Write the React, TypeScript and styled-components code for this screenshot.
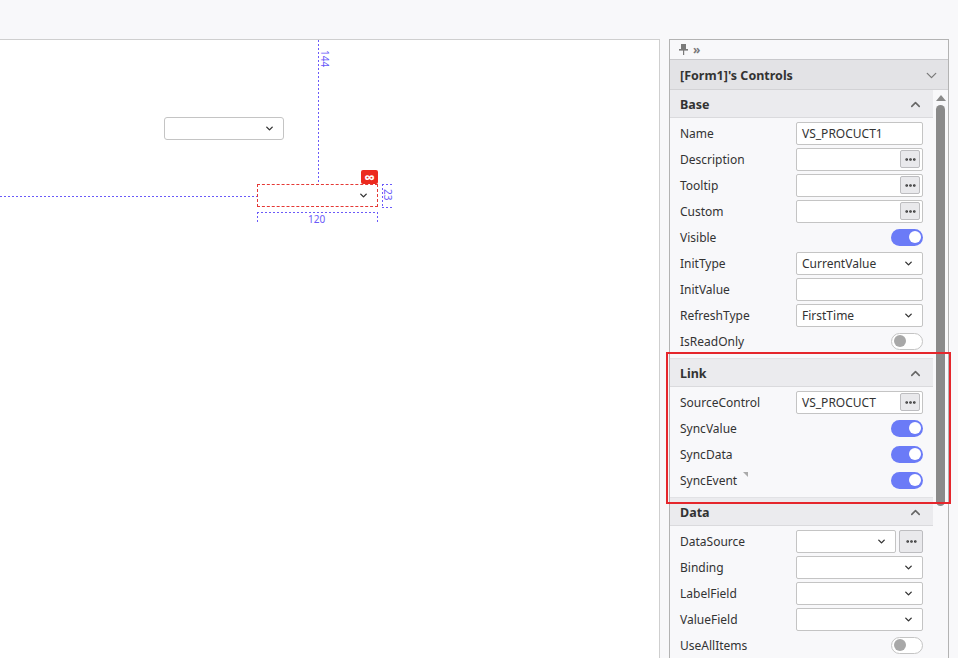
import React from 'react';
import styled, { createGlobalStyle } from 'styled-components';
import { ChevronDown, ChevronUp, Ellipsis } from 'lucide-react';

const GlobalStyle = createGlobalStyle`
  html, body {
    margin: 0;
    padding: 0;
    background: #f8f8fa;
    font-family: "Noto Sans", "Open Sans", sans-serif;
    color: #333;
  }
  * { box-sizing: border-box; }
`;

const GUIDE = '#6a5af9';

const Page = styled.div`
  position: relative;
  width: 958px;
  height: 658px;
  padding-top: 39px;
  display: flex;
  gap: 9px;
  overflow: hidden;
`;

const Canvas = styled.div`
  position: relative;
  flex: 0 0 660px;
  height: 619px;
  background: #fff;
  border-top: 1px solid #cfcfcf;
  border-right: 1px solid #cfcfcf;
`;

const VLine = styled.div<{ $h: number }>`
  position: absolute;
  width: 1px;
  height: ${p => p.$h}px;
  background: repeating-linear-gradient(to bottom, ${GUIDE} 0 2px, transparent 2px 4px);
`;

const HLine = styled.div<{ $w: number }>`
  position: absolute;
  height: 1px;
  width: ${p => p.$w}px;
  background: repeating-linear-gradient(to right, ${GUIDE} 0 2px, transparent 2px 4px);
`;

const GuideText = styled.span<{ $rotate?: boolean }>`
  position: absolute;
  font-size: 10px;
  line-height: 10px;
  color: ${GUIDE};
  transform: ${p => (p.$rotate ? 'rotate(90deg)' : 'none')};
  transform-origin: left top;
`;

const DropBox = styled.div<{ $selected?: boolean }>`
  position: absolute;
  display: flex;
  align-items: center;
  justify-content: flex-end;
  padding-right: 8px;
  height: 23px;
  background: #fff;
  border: ${p => (p.$selected ? '1px dashed #e53935' : '1px solid #c4c4c4')};
  border-radius: ${p => (p.$selected ? '0' : '3px')};
  color: #333;
`;

const Badge = styled.div`
  position: absolute;
  width: 17px;
  height: 14px;
  border-radius: 2px;
  background: #ec2a1e;
  color: #fff;
  font-size: 15px;
  font-weight: 700;
  line-height: 14px;
  text-align: center;
`;

const Panel = styled.div`
  flex: 0 0 280px;
  height: 640px;
  border: 1px solid #b3b3b3;
  border-bottom: none;
  background: #f8f8fa;
  display: flex;
  flex-direction: column;
`;

const TopBar = styled.div`
  height: 20px;
  display: flex;
  align-items: center;
  gap: 5px;
  padding-left: 9px;
  color: #7a7a7a;
  font-size: 12px;
  font-weight: 700;
  border-bottom: 1px solid #c9c9cc;
`;

const TitleBar = styled.div`
  height: 30px;
  display: flex;
  align-items: center;
  justify-content: space-between;
  padding: 1px 8px 0 10px;
  background: #e3e3e6;
  font-size: 12.5px;
  font-weight: 700;
  color: #333;
  border-bottom: 1px solid #d2d2d5;
`;

const Body = styled.div`
  flex: 1;
  display: flex;
  min-height: 0;
`;

const Sections = styled.div`
  flex: 1;
  display: flex;
  flex-direction: column;
`;

const Scrollbar = styled.div`
  flex: 0 0 15px;
  display: flex;
  flex-direction: column;
  align-items: center;
  padding-top: 5px;
  gap: 4px;
`;

const ScrollArrow = styled.div`
  width: 0;
  height: 0;
  border-left: 5px solid transparent;
  border-right: 5px solid transparent;
  border-bottom: 6px solid #8a8a8a;
`;

const Thumb = styled.div`
  width: 9px;
  height: 401px;
  border-radius: 5px;
  background: #8a8a8a;
`;

const SectionHeader = styled.div`
  height: 28px;
  display: flex;
  align-items: center;
  justify-content: space-between;
  padding: 1px 10px 0 10px;
  background: #ebebee;
  border-bottom: 1px solid #dadadd;
  font-size: 12.5px;
  font-weight: 700;
  color: #333;
`;

const SectionBody = styled.div`
  padding: 2px 9px 4px 10px;
  border-bottom: 1px solid #e2e2e5;
`;

const Row = styled.div`
  height: 26px;
  display: flex;
  align-items: center;
`;

const Label = styled.div`
  flex: 0 0 116px;
  font-size: 12px;
  color: #333;
`;

const Tick = styled.span`
  display: inline-block;
  margin-left: 6px;
  width: 0;
  height: 0;
  vertical-align: top;
  border-top: 5px solid #aaa;
  border-left: 5px solid transparent;
`;

const Field = styled.div<{ $w?: number }>`
  width: ${p => p.$w ?? 127}px;
  height: 23px;
  background: #fff;
  border: 1px solid #c4c4c4;
  border-radius: 2px;
  display: flex;
  align-items: center;
  justify-content: space-between;
  padding: 0 2px 0 5px;
  font-size: 12px;
  color: #333;
`;

const DotsBtn = styled.div<{ $outside?: boolean }>`
  width: ${p => (p.$outside ? 24 : 20)}px;
  height: ${p => (p.$outside ? 23 : 18)}px;
  margin-left: ${p => (p.$outside ? 3 : 0)}px;
  background: #e9e9ec;
  border: 1px solid #bdbdc0;
  border-radius: 2px;
  display: flex;
  align-items: center;
  justify-content: center;
  color: #333;
`;

const ChevronSlot = styled.span`
  display: flex;
  padding-right: 6px;
  color: #333;
`;

const ToggleWrap = styled.div`
  margin-left: auto;
  margin-right: 1px;
  width: 32px;
  height: 17px;
  border-radius: 9px;
  display: flex;
  align-items: center;
  padding: 0 2px;
  &[data-on='true'] {
    background: #6b7bf7;
    justify-content: flex-end;
  }
  &[data-on='false'] {
    background: #fff;
    border: 1px solid #c4c4c4;
    justify-content: flex-start;
  }
`;

const Knob = styled.div<{ $on: boolean }>`
  width: 12px;
  height: 12px;
  border-radius: 50%;
  background: ${p => (p.$on ? '#fff' : '#a8a8a8')};
`;

const Highlight = styled.div`
  position: absolute;
  left: 666px;
  top: 352px;
  width: 285px;
  height: 152px;
  border: 2px solid #e5262c;
  pointer-events: none;
`;

type Kind = 'text' | 'dots' | 'toggle' | 'select' | 'selectDots';
type Prop = { label: string; kind: Kind; value?: string; on?: boolean; mark?: boolean };

const sections: { title: string; rows: Prop[] }[] = [
  {
    title: 'Base',
    rows: [
      { label: 'Name', kind: 'text', value: 'VS_PROCUCT1' },
      { label: 'Description', kind: 'dots' },
      { label: 'Tooltip', kind: 'dots' },
      { label: 'Custom', kind: 'dots' },
      { label: 'Visible', kind: 'toggle', on: true },
      { label: 'InitType', kind: 'select', value: 'CurrentValue' },
      { label: 'InitValue', kind: 'text' },
      { label: 'RefreshType', kind: 'select', value: 'FirstTime' },
      { label: 'IsReadOnly', kind: 'toggle', on: false },
    ],
  },
  {
    title: 'Link',
    rows: [
      { label: 'SourceControl', kind: 'dots', value: 'VS_PROCUCT' },
      { label: 'SyncValue', kind: 'toggle', on: true },
      { label: 'SyncData', kind: 'toggle', on: true },
      { label: 'SyncEvent', kind: 'toggle', on: true, mark: true },
    ],
  },
  {
    title: 'Data',
    rows: [
      { label: 'DataSource', kind: 'selectDots' },
      { label: 'Binding', kind: 'select' },
      { label: 'LabelField', kind: 'select' },
      { label: 'ValueField', kind: 'select' },
      { label: 'UseAllItems', kind: 'toggle', on: false },
    ],
  },
];

const Chevron = () => (
  <ChevronSlot>
    <ChevronDown size={11} strokeWidth={3} />
  </ChevronSlot>
);

const Dots = () => <Ellipsis size={13} strokeWidth={3} />;

const Toggle = ({ on }: { on: boolean }) => (
  <ToggleWrap data-on={String(on)}>
    <Knob $on={on} />
  </ToggleWrap>
);

const Editor = ({ p }: { p: Prop }) => {
  switch (p.kind) {
    case 'toggle':
      return <Toggle on={!!p.on} />;
    case 'dots':
      return (
        <Field>
          <span>{p.value}</span>
          <DotsBtn>
            <Dots />
          </DotsBtn>
        </Field>
      );
    case 'select':
      return (
        <Field>
          <span>{p.value}</span>
          <Chevron />
        </Field>
      );
    case 'selectDots':
      return (
        <>
          <Field $w={100}>
            <span />
            <Chevron />
          </Field>
          <DotsBtn $outside>
            <Dots />
          </DotsBtn>
        </>
      );
    default:
      return (
        <Field>
          <span>{p.value}</span>
        </Field>
      );
  }
};

const PinIcon = () => (
  <svg width="9" height="11" viewBox="0 0 9 11">
    <rect x="2" y="0" width="5" height="5" fill="#7a7a7a" />
    <rect x="0" y="5" width="9" height="1.6" fill="#7a7a7a" />
    <rect x="4" y="6" width="1.2" height="5" fill="#7a7a7a" />
  </svg>
);

export default function App() {
  return (
    <>
      <GlobalStyle />
      <Page>
        <Canvas>
          <VLine $h={143} style={{ left: 318, top: 0 }} />
          <GuideText $rotate style={{ left: 330, top: 10 }}>144</GuideText>
          <HLine $w={257} style={{ left: 0, top: 156 }} />
          <DropBox style={{ left: 164, top: 77, width: 120 }}>
            <ChevronDown size={11} strokeWidth={3} />
          </DropBox>
          <DropBox $selected style={{ left: 257, top: 144, width: 121 }}>
            <ChevronDown size={11} strokeWidth={3} />
          </DropBox>
          <Badge style={{ left: 361, top: 130 }}>∞</Badge>
          <HLine $w={121} style={{ left: 257, top: 172 }} />
          <VLine $h={11} style={{ left: 257, top: 172 }} />
          <VLine $h={11} style={{ left: 377, top: 172 }} />
          <GuideText style={{ left: 308, top: 174 }}>120</GuideText>
          <VLine $h={24} style={{ left: 382, top: 144 }} />
          <HLine $w={10} style={{ left: 382, top: 144 }} />
          <HLine $w={10} style={{ left: 382, top: 167 }} />
          <GuideText $rotate style={{ left: 393, top: 149 }}>23</GuideText>
        </Canvas>
        <Panel>
          <TopBar>
            <PinIcon />
            <span>»</span>
          </TopBar>
          <TitleBar>
            <span>[Form1]'s Controls</span>
            <ChevronDown size={17} strokeWidth={1.8} color="#7a7a7a" />
          </TitleBar>
          <Body>
            <Sections>
              {sections.map(s => (
                <div key={s.title}>
                  <SectionHeader>
                    <span>{s.title}</span>
                    <ChevronUp size={15} strokeWidth={2.5} color="#666" />
                  </SectionHeader>
                  <SectionBody>
                    {s.rows.map(r => (
                      <Row key={r.label}>
                        <Label>
                          {r.label}
                          {r.mark && <Tick />}
                        </Label>
                        <Editor p={r} />
                      </Row>
                    ))}
                  </SectionBody>
                </div>
              ))}
            </Sections>
            <Scrollbar>
              <ScrollArrow />
              <Thumb />
            </Scrollbar>
          </Body>
        </Panel>
        <Highlight />
      </Page>
    </>
  );
}
